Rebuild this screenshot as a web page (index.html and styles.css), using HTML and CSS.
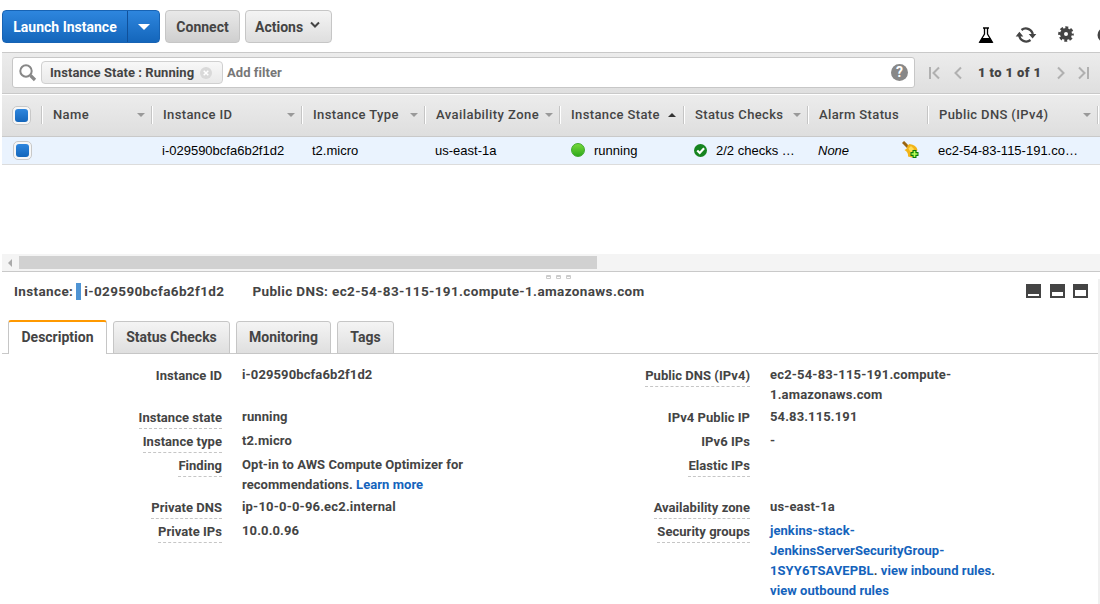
FILE: index.html
```html
<!DOCTYPE html>
<html lang="en">
<head>
<meta charset="utf-8">
<title>Instances</title>
<link rel="stylesheet" href="styles.css">
</head>
<body>
<header class="toolbar">
  <div class="split"><button class="launch">Launch Instance</button><button class="launch-more" aria-label="More"><i class="caret"></i></button></div>
  <button class="btn connect">Connect</button>
  <button class="btn actions">Actions <svg width="12" height="8" viewBox="0 0 12 8"><path d="M2 1.500 6 5.500 10 1.500" fill="none" stroke="#444" stroke-width="2"/></svg></button>
  <div class="tools">
    <svg width="16" height="17" viewBox="0 0 16 17"><path d="M5 1h6M6.500 1v6L1.700 15h12.600L9.500 7V1" fill="none" stroke="#000" stroke-width="1.300"/><path d="M4 11h8l3 5H1z"/></svg>
    <svg width="22" height="18" viewBox="0 0 22 18"><path d="M6.500 4A7 7 0 0 1 17.800 9M15.500 14A7 7 0 0 1 4.200 9" fill="none" stroke="#444" stroke-width="2.300"/><path d="M13.700 8h7.600l-3.700 4.600zM.700 10.500H8.300L4.400 5.800z" fill="#444"/></svg>
    <svg width="16" height="16" viewBox="0 0 16 16"><g fill="none" stroke="#444"><circle cx="8" cy="8" r="4" stroke-width="4"/><circle cx="8" cy="8" r="6.500" stroke-width="2.600" stroke-dasharray="2.900 2.205" stroke-dashoffset="1.450"/></g></svg>
    <svg class="cut" width="16" height="16" viewBox="0 0 16 16"><circle cx="8" cy="8" r="7.500" fill="#444"/></svg>
  </div>
</header>

<section class="filter-bar">
  <div class="search">
    <svg class="glass" width="18" height="18" viewBox="0 0 18 18"><circle cx="7" cy="7" r="5.700" fill="none" stroke="#888" stroke-width="2"/><path d="M11.500 11.500 16 16" stroke="#888" stroke-width="3.200"/></svg>
    <span class="chip">Instance State : Running <svg width="12" height="12" viewBox="0 0 12 12"><circle cx="6" cy="6" r="6" fill="#d9d9d9"/><path d="M3.700 3.700l4.600 4.600M8.300 3.700 3.700 8.300" stroke="#fff" stroke-width="1.500"/></svg></span>
    <span class="add">Add filter</span>
    <span class="help">?</span>
  </div>
  <nav class="pager">
    <svg width="11" height="14" viewBox="0 0 11 14"><path d="M1 1v12M10 1.500 4.500 7l5.500 5.500"/></svg>
    <svg width="8" height="14" viewBox="0 0 8 14"><path d="M7 1.500 1.500 7 7 12.500"/></svg>
    <b>1 to 1 of 1</b>
    <svg width="8" height="14" viewBox="0 0 8 14"><path d="M1 1.500 6.500 7 1 12.500"/></svg>
    <svg width="11" height="14" viewBox="0 0 11 14"><path d="M10 1v12M1 1.500 6.500 7 1 12.500"/></svg>
  </nav>
</section>

<section class="table">
  <div class="row head">
    <div class="pick"><i class="check"></i></div>
    <div class="cell">Name<i class="sort"></i></div>
    <div class="cell">Instance ID<i class="sort"></i></div>
    <div class="cell">Instance Type<i class="sort"></i></div>
    <div class="cell zone">Availability Zone<i class="sort"></i></div>
    <div class="cell state">Instance State<i class="sort up"></i></div>
    <div class="cell">Status Checks<i class="sort"></i></div>
    <div class="cell">Alarm Status</div>
    <div class="cell">Public DNS (IPv4)<i class="sort"></i></div>
    <div class="cell"></div>
  </div>
  <div class="row data">
    <div class="pick"><i class="check"></i></div>
    <div class="cell"></div>
    <div class="cell">i-029590bcfa6b2f1d2</div>
    <div class="cell">t2.micro</div>
    <div class="cell">us-east-1a</div>
    <div class="cell state"><i class="dot"></i>running</div>
    <div class="cell"><svg class="ok" width="13" height="13" viewBox="0 0 12 12"><circle cx="6" cy="6" r="6" fill="#16841f"/><path d="M3 6l2.300 2.300L9.300 4" fill="none" stroke="#fff" stroke-width="2"/></svg>2/2 checks …</div>
    <div class="cell"><em>None</em><svg class="bell" width="18" height="18" viewBox="0 0 18 18"><path d="M1 1 6 6" stroke="#9a6410" stroke-width="3"/><path d="M2.500 9Q5.500 8 5.500 4.500L7.500 3Q14.500 4 15.500 9L10 16.500 6 15.500Q6.500 11 2.500 9z" fill="#f2b418"/><path d="M6.500 7.500 9 5 12 8 9 12z" fill="#ffdc55"/><path d="M12.500 9v8M8.500 13h8" stroke="#087b08" stroke-width="4"/><path d="M12.500 10v6M9.500 13h6" stroke="#b9ff55" stroke-width="1.700"/></svg></div>
    <div class="cell">ec2-54-83-115-191.co…</div>
    <div class="cell"></div>
  </div>
</section>

<div class="scroll"><i class="left"></i><i class="thumb"></i></div>

<section class="details">
  <div class="grip"><i></i><i></i><i></i></div>
  <div class="title">
    <span>Instance:</span><i class="mark"></i><span class="iid">i-029590bcfa6b2f1d2</span>
    <span class="pub">Public DNS: ec2-54-83-115-191.compute-1.amazonaws.com</span>
    <div class="panes"><i></i><i class="mid"></i><i class="full"></i></div>
  </div>
  <div class="tabs">
    <span class="tab active">Description</span><span class="tab checks">Status Checks</span><span class="tab monitor">Monitoring</span><span class="tab tags">Tags</span>
  </div>
  <div class="columns">
    <dl class="first">
      <dt>Instance ID</dt><dd>i-029590bcfa6b2f1d2</dd>
      <dt><u>Instance state</u></dt><dd>running</dd>
      <dt><u>Instance type</u></dt><dd>t2.micro</dd>
      <dt><u>Finding</u></dt><dd class="prose">Opt-in to AWS Compute Optimizer for<br>recommendations. <a>Learn more</a></dd>
      <dt><u>Private DNS</u></dt><dd class="host">ip-10-0-0-96.ec2.internal</dd>
      <dt><u>Private IPs</u></dt><dd>10.0.0.96</dd>
    </dl>
    <dl class="second">
      <dt><u>Public DNS (IPv4)</u></dt><dd class="host">ec2-54-83-115-191.compute-<br>1.amazonaws.com</dd>
      <dt>IPv4 Public IP</dt><dd>54.83.115.191</dd>
      <dt>IPv6 IPs</dt><dd>-</dd>
      <dt><u>Elastic IPs</u></dt><dd></dd>
      <dt><u>Availability zone</u></dt><dd>us-east-1a</dd>
      <dt><u>Security groups</u></dt><dd class="prose"><a>jenkins-stack-<br>JenkinsServerSecurityGroup-<br>1SYY6TSAVEPBL</a>. <a>view inbound rules</a>.<br><a>view outbound rules</a></dd>
    </dl>
  </div>
</section>
</body>
</html>
```
FILE: styles.css
```css
* { box-sizing: border-box; }
body { margin: 0; width: 1100px; height: 604px; overflow: hidden; background: #fff; color: #444; font: 700 13px/20px Roboto, "Liberation Sans", sans-serif; }
svg, i { display: block; flex: none; }
button { font: inherit; color: inherit; padding: 0; white-space: nowrap; }

.toolbar { display: flex; height: 52px; padding: 10px 0 0 2px; overflow: hidden; }
.split, .btn { flex: none; }
.split { display: flex; width: 158px; height: 33px; border: 1px solid #1763b4; border-radius: 4px; background: linear-gradient(#2e86de, #1466bb); overflow: hidden; }
.launch { width: 125px; border: 0; border-right: 1px solid #10509a; background: none; color: #fff; font-size: 14px; }
.launch-more { display: flex; flex: 1; align-items: center; justify-content: center; border: 0; background: none; }
.caret { border: 6px solid transparent; border-top-color: #fff; border-bottom: 0; }
.btn { height: 33px; border: 1px solid #c6c6c6; border-radius: 4px; background: linear-gradient(#f4f4f4, #dedede); font-size: 14px; }
.connect { width: 75px; margin-left: 5px; background: linear-gradient(#e9e9e9, #cfcfcf); }
.actions { display: flex; width: 87px; margin-left: 5px; padding-left: 9px; align-items: center; gap: 6px; }
.actions svg { margin-top: -4px; }
.tools { display: flex; margin: 16px 0 0 646px; height: 18px; align-items: center; gap: 21px; }
.tools svg:nth-child(3) { margin: -2px 0 0 0; }
.tools .cut { margin-left: 2px; }

.filter-bar { display: flex; height: 42px; margin-left: 2px; padding: 4px 0 0 10px; border-top: 1px solid #c9c9c9; border-bottom: 1px solid #c9c9c9; background: linear-gradient(#ececec, #dfdfdf); }
.search { display: flex; width: 903px; height: 31px; padding: 0 6px; align-items: center; border: 1px solid #c7c7c7; border-radius: 3px; background: #fff; }
.chip { display: flex; width: 182px; height: 23px; margin-left: 4px; padding-left: 8px; align-items: center; gap: 6px; border: 1px solid #d0d0d0; border-radius: 4px; background: linear-gradient(#f8f8f8, #e9e9e9); white-space: nowrap; letter-spacing: .06px; }
.add { margin-left: 4px; color: #777; letter-spacing: .06px; }
.help { width: 17px; height: 17px; margin-left: auto; border-radius: 50%; background: #888; color: #fff; font-size: 14px; line-height: 17px; text-align: center; }
.pager { display: flex; height: 31px; margin-left: 14px; align-items: center; }
.pager svg { fill: none; stroke: #b0b0b0; stroke-width: 2; }
.pager svg:nth-child(2) { margin-left: 14px; }
.pager b { width: 64px; margin: 0 15px 0 16px; white-space: nowrap; letter-spacing: .38px; }
.pager svg:last-child { margin-left: 13px; }

.table { margin-left: 2px; height: 160px; }
.row { display: grid; grid-template-columns: 39px 110px 150px 123px 135px 124px 124px 120px 170px 4px; align-items: center; }
.head { height: 43px; padding-bottom: 2px; border-top: 1px solid #fff; border-bottom: 1px solid #c9c9c9; background: linear-gradient(#ececec, #dedede); font-weight: 500; }
.head .cell { display: flex; height: 18px; padding: 0 6px 0 11px; align-items: center; justify-content: space-between; border-left: 1px solid #c5c5c5; box-shadow: inset 1px 0 #fff; letter-spacing: .37px; white-space: nowrap; }
.head .zone { letter-spacing: .43px; }
.head .state { padding-right: 7px; }
.pick { padding-left: 10px; }
.head .check { margin-top: 1px; }
.data .pick { padding-left: 11px; }
.data .check { margin-top: -1px; }
.check { width: 19px; height: 19px; padding: 2px; border: 1px solid #c8c8c8; border-radius: 5px; background: #f7f7f7; }
.check::before { content: ""; display: block; width: 13px; height: 13px; border-radius: 3px; background: linear-gradient(#2e86de, #1466bb); }
.sort { border: 4px solid transparent; border-top-color: #999; border-bottom: 0; }
.up { border-top: 0; border-bottom: 4px solid #333; }
.data { height: 28px; border-bottom: 1px solid #dcdcdc; background: #eaf3fe; color: #000; font: 13px/20px "Liberation Sans", sans-serif; }
.data .cell { display: flex; padding-left: 11px; align-items: center; white-space: nowrap; }
.data .state { padding-left: 12px; }
.dot { width: 14px; height: 14px; margin: -1px 9px 0 0; border-radius: 50%; background: linear-gradient(#76d83a, #2faa1c); border: 1px solid #3fa82b; }
.ok { margin-right: 9px; }
.bell { margin: -1px 0 0 53px; }

.scroll { display: flex; height: 18px; margin-left: 2px; align-items: center; border-bottom: 1px solid #c9c9c9; background: #f4f4f4; }
.left { margin: 0 7px 0 6px; border: 4px solid transparent; border-right-color: #aaa; border-left: 0; }
.thumb { width: 578px; height: 13px; background: #d1d1d1; }

.details { height: 332px; margin-left: 2px; background: linear-gradient(#f0f0f0, #f0f0f0) 1096px 7px / 2px 100% no-repeat; }
.grip { display: flex; height: 9px; padding: 3px 0 0 544px; gap: 5px; }
.grip i { width: 5px; height: 4px; border: 1px solid #ccc; border-top-width: 2px; border-radius: 1px; }
.title { display: flex; height: 39px; padding-left: 12px; align-items: flex-start; font-size: 13.5px; letter-spacing: .37px; white-space: nowrap; }
.mark { width: 5px; height: 17px; margin: 2px 3px 0; background: #4f94d4; }
.pub { margin-left: 28px; }
.panes { display: flex; margin: 3px 12px 0 auto; gap: 9px; }
.panes i { width: 15px; height: 14px; border: 2px solid #444; border-top-width: 10px; }
.panes .mid { border-top-width: 8px; }
.panes .full { border-top-width: 6px; margin-left: -1px; }
.tabs { display: flex; height: 34px; padding-left: 6px; gap: 6px; margin-right: 2px; box-shadow: inset 0 -1px #c9c9c9; font-size: 14px; }
.tab { height: 33px; margin-top: 1px; border: 1px solid #c6c6c6; border-radius: 3px 3px 0 0; background: linear-gradient(#f4f4f4, #dfdfdf); line-height: 31px; text-align: center; }
.active { width: 99px; height: 34px; margin-top: 0; border-top: 2px solid #f90; border-bottom: 0; background: #fff; }
.checks { width: 117px; }
.monitor { width: 95px; }
.tags { width: 57px; }

.columns { display: flex; padding-top: 11px; }
dl { display: grid; margin: 0; column-gap: 20px; row-gap: 4px; grid-template-rows: 38px 20px 20px 38px 20px; align-content: start; }
.first { width: 528px; grid-template-columns: 220px 1fr; }
.second { width: 560px; grid-template-columns: 220px 1fr; }
dt { text-align: right; padding-top: 1px; letter-spacing: .04px; }
dd { margin: 0; white-space: nowrap; letter-spacing: .12px; }
.host { letter-spacing: .18px; }
.prose { letter-spacing: .06px; }
u { display: inline-block; height: 21px; border-bottom: 1px dashed #c6c6c6; text-decoration: none; }
a { color: #1463bc; }
```
